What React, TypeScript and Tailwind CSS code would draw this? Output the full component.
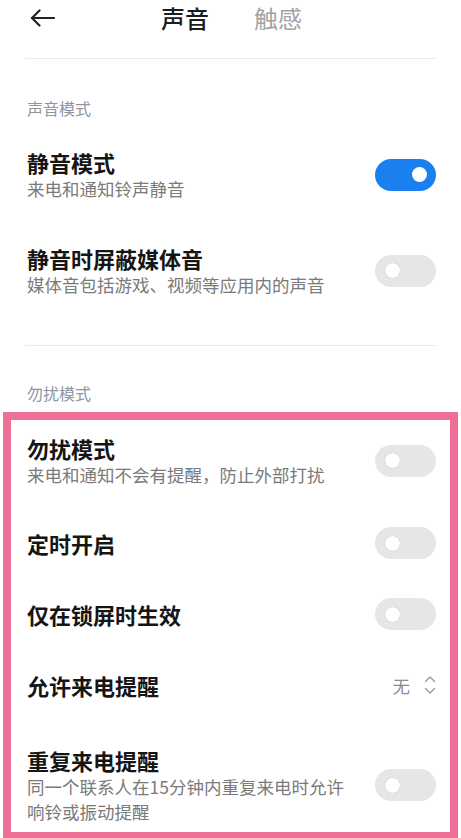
import React from 'react';

function Toggle({ on = false }: { on?: boolean }) {
  return (
    <div
      className={`flex h-[32px] w-[61px] shrink-0 items-center rounded-full px-[10px] ${
        on ? 'justify-end bg-[#1a80f0] pr-[9px]' : 'justify-start bg-[#e6e6e6]'
      }`}
    >
      <div className={`h-[15px] w-[15px] rounded-full bg-white ${on ? '' : 'shadow-[0_0_1px_rgba(0,0,0,0.25)]'}`} />
    </div>
  );
}

function SettingRow({
  title,
  subtitle,
  right,
  className = '',
}: {
  title: string;
  subtitle?: string;
  right: React.ReactNode;
  className?: string;
}) {
  return (
    <div className={`flex items-center justify-between ${className}`}>
      <div className="max-w-[328px]">
        <div className="text-[22px] font-bold leading-[28px] text-[#151515]">{title}</div>
        {subtitle && <div className="text-[17.5px] leading-[25px] text-[#7a7a7a]">{subtitle}</div>}
      </div>
      {right}
    </div>
  );
}

function SectionLabel({ children, className = '' }: { children: React.ReactNode; className?: string }) {
  return <div className={`text-[16px] leading-[20px] text-[#8e959f] ${className}`}>{children}</div>;
}

export default function App(): JSX.Element {
  return (
    <div
      className="min-h-[838px] w-[461px] overflow-hidden bg-white"
      style={{ fontFamily: '"Noto Sans CJK SC", "Noto Sans", sans-serif' }}
    >
      {/* top bar */}
      <div className="relative flex h-[36px] items-center px-[30px]">
        <svg width="26" height="18" viewBox="0 0 26 18" fill="none" stroke="#222" strokeWidth="2.2" strokeLinecap="round" strokeLinejoin="round">
          <path d="M2 9h22" />
          <path d="M9.5 1.5 2 9l7.5 7.5" />
        </svg>
        <div className="ml-[105px] flex gap-[45px] text-[24px] leading-[30px]">
          <span className="font-medium text-[#1d1d1d]">声音</span>
          <span className="text-[#a3a3a3]">触感</span>
        </div>
      </div>

      <div className="mx-[25px] mt-[22px] h-px bg-[#ececec]" />

      <div className="pl-[27px] pr-[25px]">
        <SectionLabel className="mt-[39px]">声音模式</SectionLabel>
        <SettingRow className="mt-[30px]" title="静音模式" subtitle="来电和通知铃声静音" right={<Toggle on />} />
        <SettingRow className="mt-[43px]" title="静音时屏蔽媒体音" subtitle="媒体音包括游戏、视频等应用内的声音" right={<Toggle />} />
      </div>

      <div className="mx-[25px] mt-[48px] h-px bg-[#ececec]" />

      <div className="pl-[27px] pr-[25px]">
        <SectionLabel className="mt-[37px]">勿扰模式</SectionLabel>
      </div>

      <div className="mx-[3px] mt-[9px] border-[8px] border-[#ee7096] pb-[8px] pl-[16px] pr-[14px] pt-[14px]">
        <SettingRow title="勿扰模式" subtitle="来电和通知不会有提醒，防止外部打扰" right={<Toggle />} />
        <SettingRow className="mt-[40px]" title="定时开启" right={<Toggle />} />
        <SettingRow className="mt-[39px]" title="仅在锁屏时生效" right={<Toggle />} />
        <SettingRow
          className="mt-[41px]"
          title="允许来电提醒"
          right={
            <div className="flex items-center gap-[14px] text-[17.5px] leading-[25px] text-[#8c8c8c]">
              <span>无</span>
              <svg width="12" height="20" viewBox="0 0 12 20" fill="none" stroke="#9a9a9a" strokeWidth="1.4" strokeLinecap="round" strokeLinejoin="round">
                <path d="M1.5 6.5 6 2l4.5 4.5" />
                <path d="M1.5 13.5 6 18l4.5-4.5" />
              </svg>
            </div>
          }
        />
        <SettingRow
          className="mt-[47px]"
          title="重复来电提醒"
          subtitle="同一个联系人在15分钟内重复来电时允许响铃或振动提醒"
          right={<Toggle />}
        />
      </div>
    </div>
  );
}
